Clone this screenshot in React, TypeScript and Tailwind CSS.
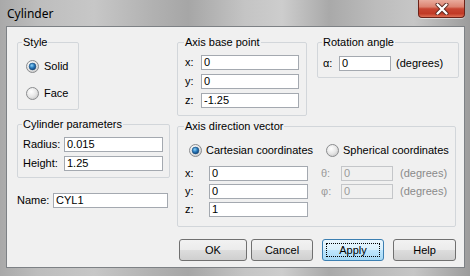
import React from "react";

function Radio({ checked }: { checked?: boolean }) {
  return (
    <svg width="13" height="13" viewBox="0 0 13 13" className="shrink-0">
      <defs>
        <radialGradient id={checked ? "rgc" : "rgu"} cx="0.4" cy="0.35" r="0.7">
          <stop offset="0" stopColor="#ffffff" />
          <stop offset="0.6" stopColor="#e6e6e6" />
          <stop offset="1" stopColor="#c8c8c8" />
        </radialGradient>
        <radialGradient id="dot" cx="0.4" cy="0.35" r="0.7">
          <stop offset="0" stopColor="#8fd3f7" />
          <stop offset="0.5" stopColor="#2a7bbd" />
          <stop offset="1" stopColor="#0d3b6e" />
        </radialGradient>
      </defs>
      <circle cx="6.5" cy="6.5" r="6" fill={`url(#${checked ? "rgc" : "rgu"})`} stroke="#8a8c8e" strokeWidth="1" />
      {checked && <circle cx="6.5" cy="6.5" r="3.4" fill="url(#dot)" stroke="#1c4f7e" strokeWidth="0.6" />}
    </svg>
  );
}

function Input({ value, w, disabled }: { value: string; w: string; disabled?: boolean }) {
  return (
    <div
      className={`${w} h-[15px] border flex items-center pl-[2px] shrink-0 ${
        disabled ? "bg-[#f0f0f0] border-[#c4c6c9] text-[#9a9a9a]" : "bg-white border-[#a4a9b0] text-black"
      }`}
    >
      {value}
    </div>
  );
}

function Button({ label, w, focused }: { label: string; w: string; focused?: boolean }) {
  return (
    <div
      className={`${w} h-[22px] rounded-[3px] border flex items-center justify-center relative shrink-0 ${
        focused
          ? "border-[#3c7fb1] bg-[linear-gradient(#eaf6fd_0%,#d9f0fc_50%,#bee6fd_51%,#a7d9f5_100%)]"
          : "border-[#707070] bg-[linear-gradient(#f2f2f2_0%,#ebebeb_50%,#dddddd_51%,#cfcfcf_100%)]"
      }`}
    >
      {focused && <div className="absolute inset-[3px] border border-dotted border-black" />}
      <span className="relative">{label}</span>
    </div>
  );
}

export default function App() {
  return (
    <div
      className="w-[470px] h-[276px] flex flex-col overflow-hidden text-[11px] leading-[13px] text-black bg-[linear-gradient(90deg,#a9a9a9_0%,#bdbdbd_8%,#c7c7c7_20%,#b2b2b2_32%,#a6a6a6_40%,#c4c4c4_52%,#cdcdcd_60%,#a9a9a9_70%,#bcbcbc_80%,#c6c6c6_88%,#9c9c9c_100%)]"
      style={{ fontFamily: '"Liberation Sans", Arial, sans-serif' }}
    >
      {/* title bar */}
      <div className="h-[26px] relative shrink-0">
        <div className="pl-[7px] pt-[6px] text-[12px] leading-[15px]" style={{ fontFamily: '"Noto Sans", "Open Sans", sans-serif' }}>
          Cylinder
        </div>
        <div className="absolute right-[5px] top-0 w-[47px] h-[18px] rounded-b-[4px] border border-t-0 border-[#6b2219] bg-[linear-gradient(#e9ab9d_0%,#dc8371_40%,#c74532_52%,#c13a26_80%,#dd6f55_100%)] flex items-center justify-center shadow-[0_1px_0_rgba(255,255,255,0.5)]">
          <svg width="14" height="12" viewBox="0 0 14 12">
            <path d="M2.5 1.5 L11.5 10.5 M11.5 1.5 L2.5 10.5" stroke="#5a2a22" strokeWidth="4" strokeLinecap="round" />
            <path d="M2.5 1.5 L11.5 10.5 M11.5 1.5 L2.5 10.5" stroke="#ffffff" strokeWidth="2.3" strokeLinecap="round" />
          </svg>
        </div>
      </div>

      {/* client area */}
      <div className="ml-[6px] mr-[5px] h-[242px] border border-[#7d8185] bg-[#f0f0f0] flex pl-[10px] pt-[9px]">
        {/* left column */}
        <div className="w-[153px] flex flex-col">
          <fieldset className="w-[62px] h-[74px] border border-[#d2d6da] rounded-[2px] flex flex-col">
            <legend className="ml-[4px] px-[1px]">Style</legend>
            <div className="flex items-center gap-[5px] pl-[8px] mt-[11px] h-[13px]">
              <Radio checked />
              <span>Solid</span>
            </div>
            <div className="flex items-center gap-[5px] pl-[8px] mt-[14px] h-[13px]">
              <Radio />
              <span>Face</span>
            </div>
          </fieldset>

          <fieldset className="mt-[8px] w-[153px] h-[60px] border border-[#d2d6da] rounded-[2px] flex flex-col">
            <legend className="ml-[4px] px-[1px]">Cylinder parameters</legend>
            <div className="flex items-center mt-[6px] pl-[5px]">
              <span className="w-[41px]">Radius:</span>
              <Input value="0.015" w="w-[99px]" />
            </div>
            <div className="flex items-center mt-[4px] pl-[5px]">
              <span className="w-[41px]">Height:</span>
              <Input value="1.25" w="w-[99px]" />
            </div>
          </fieldset>

          <div className="flex items-center mt-[15px]">
            <span className="w-[36px]">Name:</span>
            <Input value="CYL1" w="w-[115px]" />
          </div>
        </div>

        {/* right column */}
        <div className="ml-[7px] flex flex-col">
          <div className="flex">
            <fieldset className="w-[130px] h-[80px] border border-[#d2d6da] rounded-[2px] flex flex-col">
              <legend className="ml-[6px] px-[1px]">Axis base point</legend>
              <div className="flex flex-col gap-[4px] mt-[6px] pl-[7px]">
                <div className="flex items-center">
                  <span className="w-[16px]">x:</span>
                  <Input value="0" w="w-[98px]" />
                </div>
                <div className="flex items-center">
                  <span className="w-[16px]">y:</span>
                  <Input value="0" w="w-[98px]" />
                </div>
                <div className="flex items-center">
                  <span className="w-[16px]">z:</span>
                  <Input value="-1.25" w="w-[98px]" />
                </div>
              </div>
            </fieldset>

            <fieldset className="ml-[10px] w-[142px] h-[42px] border border-[#d2d6da] rounded-[2px] flex flex-col">
              <legend className="ml-[4px] px-[1px]">Rotation angle</legend>
              <div className="flex items-center mt-[7px] pl-[5px]">
                <span className="w-[16px]">α:</span>
                <Input value="0" w="w-[52px]" />
                <span className="ml-[5px]">(degrees)</span>
              </div>
            </fieldset>
          </div>

          <fieldset className="mt-[4px] w-[279px] h-[107px] border border-[#d2d6da] rounded-[2px] flex flex-col">
            <legend className="ml-[6px] px-[1px]">Axis direction vector</legend>
            <div className="flex items-center mt-[11px] h-[13px] pl-[11px]">
              <Radio checked />
              <span className="ml-[4px] w-[120px]">Cartesian coordinates</span>
              <Radio />
              <span className="ml-[4px]">Spherical coordinates</span>
            </div>
            <div className="flex flex-col gap-[3px] mt-[9px] pl-[7px]">
              <div className="flex items-center">
                <span className="w-[24px]">x:</span>
                <Input value="0" w="w-[99px]" />
                <span className="ml-[13px] w-[20px] text-[#9a9a9a]">θ:</span>
                <Input value="0" w="w-[52px]" disabled />
                <span className="ml-[7px] text-[#8a8a8a]">(degrees)</span>
              </div>
              <div className="flex items-center">
                <span className="w-[24px]">y:</span>
                <Input value="0" w="w-[99px]" />
                <span className="ml-[13px] w-[20px] text-[#9a9a9a]">φ:</span>
                <Input value="0" w="w-[52px]" disabled />
                <span className="ml-[7px] text-[#8a8a8a]">(degrees)</span>
              </div>
              <div className="flex items-center">
                <span className="w-[24px]">z:</span>
                <Input value="1" w="w-[99px]" />
              </div>
            </div>
          </fieldset>

          <div className="flex mt-[12px] ml-[2px]">
            <Button label="OK" w="w-[68px]" />
            <Button label="Cancel" w="w-[62px] ml-[4px]" />
            <Button label="Apply" w="w-[62px] ml-[9px]" focused />
            <Button label="Help" w="w-[63px] ml-[9px]" />
          </div>
        </div>
      </div>
    </div>
  );
}
